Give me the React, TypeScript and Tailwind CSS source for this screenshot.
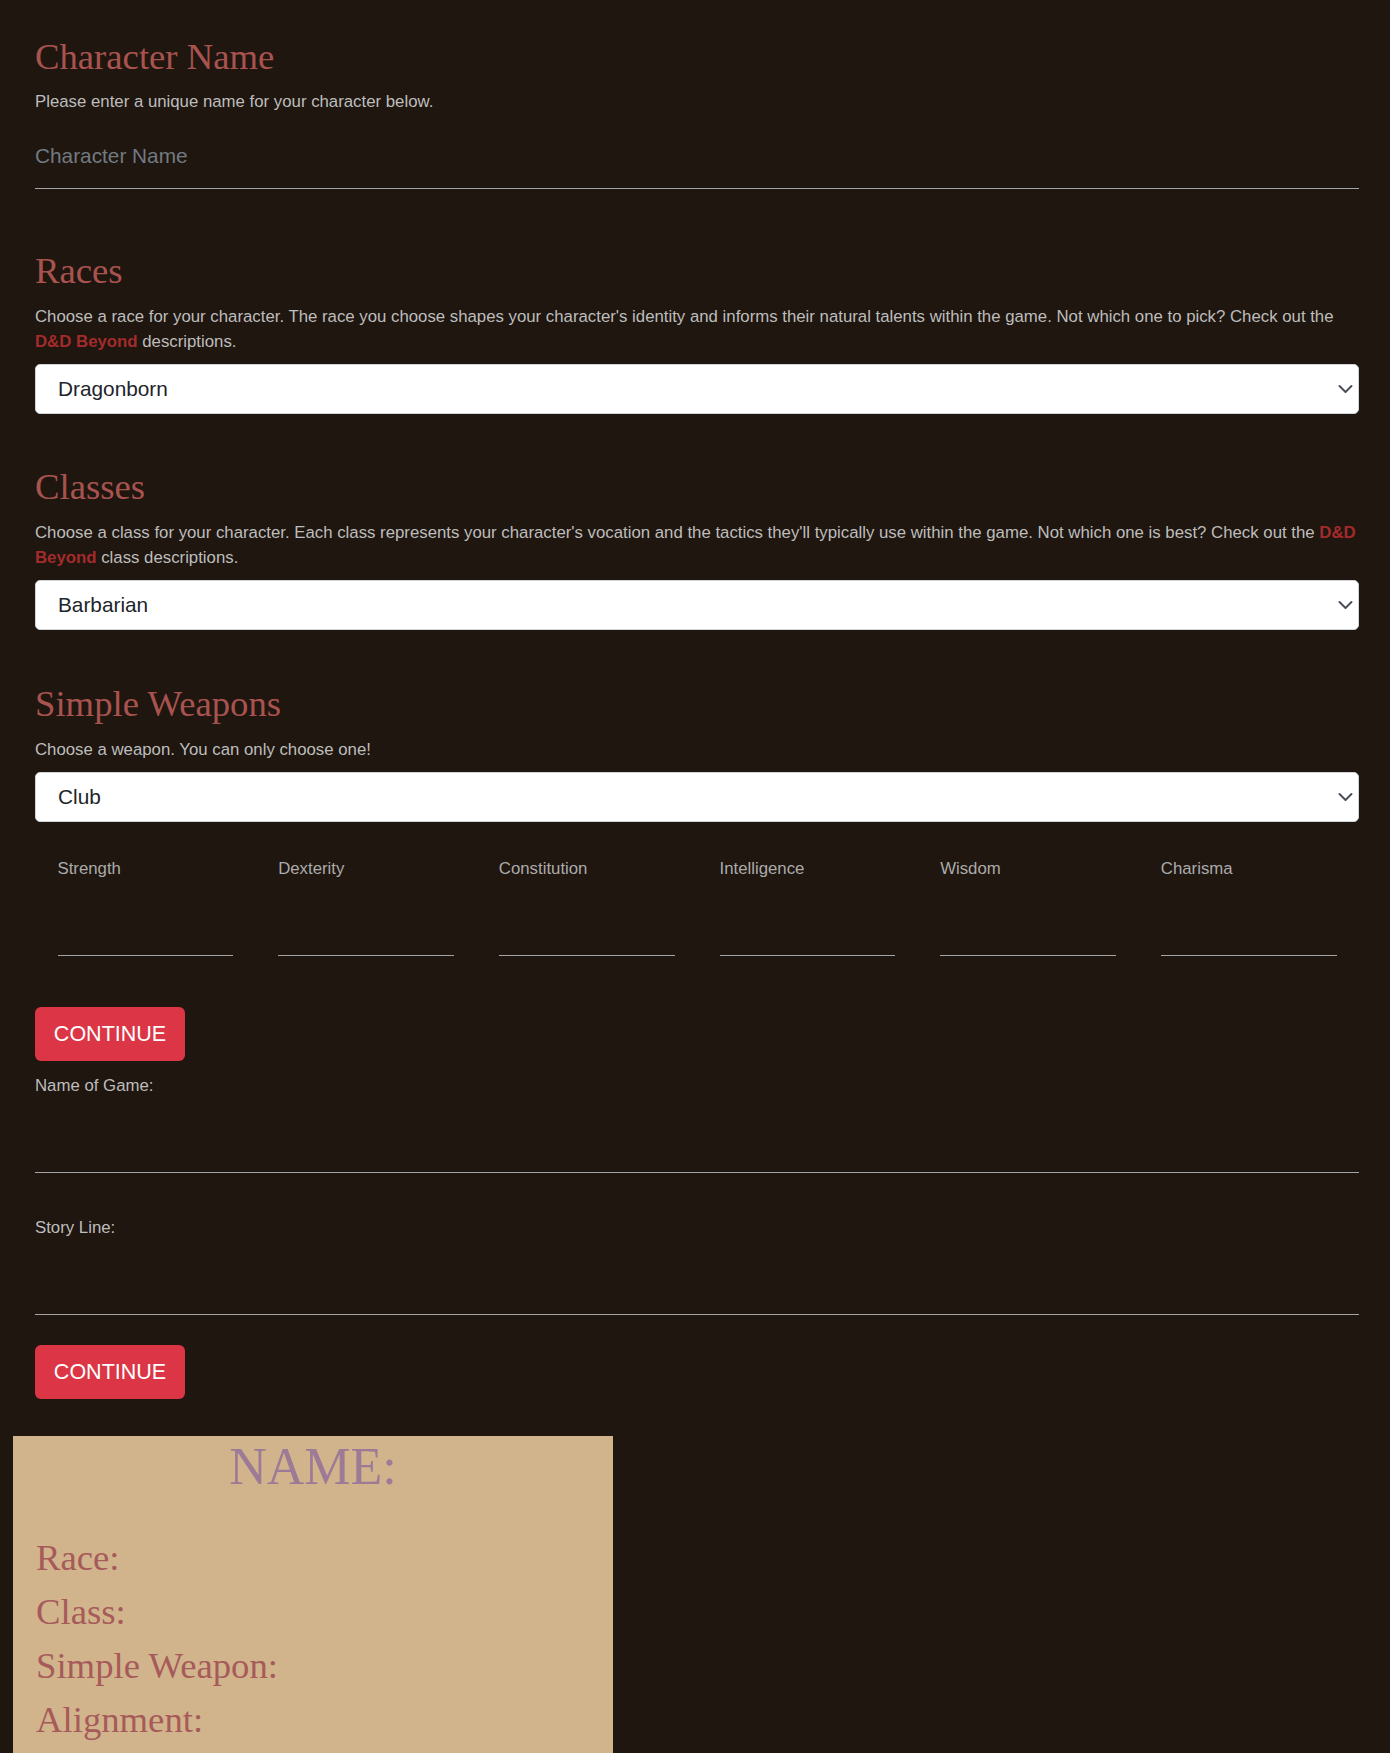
import React from "react";

const serif = "font-['Liberation_Serif','Times_New_Roman',serif]";

const races = ["Dragonborn", "Dwarf", "Elf", "Gnome", "Half-Elf", "Halfling", "Half-Orc", "Human", "Tiefling"];
const classes = ["Barbarian", "Bard", "Cleric", "Druid", "Fighter", "Monk", "Paladin", "Ranger", "Rogue", "Sorcerer", "Warlock", "Wizard"];
const weapons = ["Club", "Dagger", "Greatclub", "Handaxe", "Javelin", "Light Hammer", "Mace", "Quarterstaff", "Sickle", "Spear"];
const stats = ["Strength", "Dexterity", "Constitution", "Intelligence", "Wisdom", "Charisma"];

function Heading({ children, className = "" }: { children: React.ReactNode; className?: string }) {
  return (
    <h2 className={`${serif} text-[36.7px] leading-[44px] text-[#a9534f] ${className}`}>
      {children}
    </h2>
  );
}

function Select({ options }: { options: string[] }) {
  return (
    <div className="relative">
      <select className="block w-full h-[49.5px] appearance-none rounded-[5px] border border-[#ced4da] bg-white pl-[22px] pr-[40px] text-[20.8px] text-[#212529] outline-none">
        {options.map((o) => (
          <option key={o}>{o}</option>
        ))}
      </select>
      <svg
        className="pointer-events-none absolute right-[6px] top-1/2 -translate-y-1/2 w-[15px] h-[9px]"
        viewBox="0 0 15 9"
        fill="none"
      >
        <path d="M1.5 1.5l6 6 6-6" stroke="#4a4f57" strokeWidth="2" strokeLinecap="round" strokeLinejoin="round" />
      </svg>
    </div>
  );
}

function Link({ children }: { children: React.ReactNode }) {
  return (
    <a href="#" className="font-bold text-[#a32b2b]">
      {children}
    </a>
  );
}

function ContinueButton({ className = "" }: { className?: string }) {
  return (
    <button className={`block w-[150px] h-[54px] rounded-[6px] bg-[#dc3545] text-center text-[21.5px] uppercase text-white ${className}`}>
      Continue
    </button>
  );
}

export default function App() {
  return (
    <div className="min-h-screen overflow-hidden bg-[#1f160f] font-['Liberation_Sans',Arial,sans-serif] text-[16.8px] leading-[25px] text-[#bdbdbd]">
      <div className="pl-[35px] pr-[31px] pt-[35px]">
        <Heading>Character Name</Heading>
        <p className="mt-[10px]">Please enter a unique name for your character below.</p>
        <input
          placeholder="Character Name"
          className="mt-[18.5px] block w-full h-[56px] border-b border-[#a3a3a3] bg-transparent pt-[8px] pb-[16px] text-[20.8px] leading-[31px] text-[#d0d0d0] placeholder:text-[#727a81] outline-none"
        />

        <Heading className="mt-[60px]">Races</Heading>
        <p className="mt-[11px]">
          Choose a race for your character. The race you choose shapes your character's identity and informs their natural
          talents within the game. Not which one to pick? Check out the <Link>D&amp;D Beyond</Link> descriptions.
        </p>
        <div className="mt-[10.5px]">
          <Select options={races} />
        </div>

        <Heading className="mt-[51.5px]">Classes</Heading>
        <p className="mt-[11px]">
          Choose a class for your character. Each class represents your character's vocation and the tactics they'll
          typically use within the game. Not which one is best? Check out the <Link>D&amp;D Beyond</Link> class
          descriptions.
        </p>
        <div className="mt-[10px]">
          <Select options={classes} />
        </div>

        <Heading className="mt-[52px]">Simple Weapons</Heading>
        <p className="mt-[11px]">Choose a weapon. You can only choose one!</p>
        <div className="mt-[10.5px]">
          <Select options={weapons} />
        </div>

        <div className="mt-[34.5px] grid grid-cols-6">
          {stats.map((s) => (
            <div key={s} className="px-[22.5px]">
              <label className="block text-[#ababab]">{s}</label>
              <input className="block w-full h-[75px] border-b border-[#a3a3a3] bg-transparent outline-none" />
            </div>
          ))}
        </div>

        <ContinueButton className="mt-[51px]" />

        <label className="mt-[12px] block">Name of Game:</label>
        <input className="block w-full h-[74.5px] border-b border-[#a3a3a3] bg-transparent outline-none" />

        <label className="mt-[42px] block">Story Line:</label>
        <input className="block w-full h-[75px] border-b border-[#a3a3a3] bg-transparent outline-none" />

        <ContinueButton className="mt-[30.5px]" />
      </div>

      <div className={`${serif} ml-[13px] mt-[37px] w-[600px] bg-[#d2b48c] pl-[23px] pb-[20px]`}>
        <h1 className="-ml-[23px] text-center text-[52px] leading-[62.4px] text-[#9d7a95]">NAME:</h1>
        <ul className="mt-[32.7px] text-[36.7px] leading-[54px] text-[#a65b5a]">
          <li>Race:</li>
          <li>Class:</li>
          <li>Simple Weapon:</li>
          <li>Alignment:</li>
        </ul>
      </div>
    </div>
  );
}
